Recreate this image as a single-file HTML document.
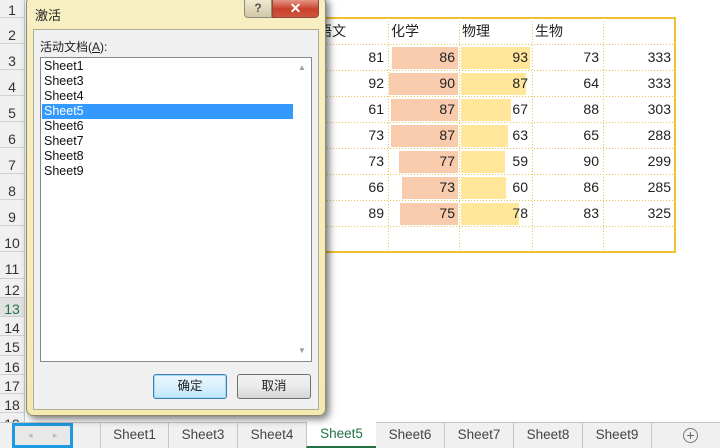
<!DOCTYPE html>
<html><head><meta charset="utf-8"><style>
*{margin:0;padding:0;box-sizing:border-box}
body{width:720px;height:448px;overflow:hidden;background:#fff;position:relative;font-family:"Liberation Sans","Noto Sans CJK SC",sans-serif;color:#222}
.a{position:absolute}
.rh{position:absolute;left:0;width:25px;background:#f0f0f0;border-bottom:1px solid #d0d0d0;border-right:1px solid #c8c8c8;font-size:14px;text-align:center;color:#333}
.cell{position:absolute;font-size:14px;height:26px;line-height:26px}
.num{text-align:right;padding-right:4px}
.tab{position:absolute;top:423px;height:25px;line-height:24px;font-size:13.5px;color:#444;text-align:center;border-left:1px solid #c6c6c6}
</style></head><body>
<div class="rh" style="top:0;height:18px;line-height:20px">1</div>
<div class="rh" style="top:18px;height:26px;line-height:34px">2</div>
<div class="rh" style="top:44px;height:26px;line-height:34px">3</div>
<div class="rh" style="top:70px;height:26px;line-height:34px">4</div>
<div class="rh" style="top:96px;height:26px;line-height:34px">5</div>
<div class="rh" style="top:122px;height:26px;line-height:34px">6</div>
<div class="rh" style="top:148px;height:26px;line-height:34px">7</div>
<div class="rh" style="top:174px;height:26px;line-height:34px">8</div>
<div class="rh" style="top:200px;height:26px;line-height:34px">9</div>
<div class="rh" style="top:226px;height:26px;line-height:34px">10</div>
<div class="rh" style="top:252px;height:27px;line-height:34px">11</div>
<div class="rh" style="top:279px;height:19px;line-height:22px">12</div>
<div class="rh" style="top:298px;height:19px;line-height:22px;color:#217346;background:#e1e1e1">13</div>
<div class="rh" style="top:317px;height:19px;line-height:22px">14</div>
<div class="rh" style="top:336px;height:20px;line-height:22px">15</div>
<div class="rh" style="top:356px;height:19px;line-height:22px">16</div>
<div class="rh" style="top:375px;height:19px;line-height:22px">17</div>
<div class="rh" style="top:394px;height:19px;line-height:22px">18</div>
<div class="rh" style="top:413px;height:12px;line-height:22px;overflow:hidden">19</div>
<div class="a" style="left:392px;top:47px;width:66px;height:22px;background:#f8cbad"></div>
<div class="a" style="left:389px;top:73px;width:69px;height:22px;background:#f8cbad"></div>
<div class="a" style="left:391px;top:99px;width:67px;height:22px;background:#f8cbad"></div>
<div class="a" style="left:391px;top:125px;width:67px;height:22px;background:#f8cbad"></div>
<div class="a" style="left:399px;top:151px;width:59px;height:22px;background:#f8cbad"></div>
<div class="a" style="left:402px;top:177px;width:56px;height:22px;background:#f8cbad"></div>
<div class="a" style="left:400px;top:203px;width:58px;height:22px;background:#f8cbad"></div>
<div class="a" style="left:461px;top:47px;width:69px;height:22px;background:#ffe699"></div>
<div class="a" style="left:461px;top:73px;width:65px;height:22px;background:#ffe699"></div>
<div class="a" style="left:461px;top:99px;width:50px;height:22px;background:#ffe699"></div>
<div class="a" style="left:461px;top:125px;width:47px;height:22px;background:#ffe699"></div>
<div class="a" style="left:461px;top:151px;width:44px;height:22px;background:#ffe699"></div>
<div class="a" style="left:461px;top:177px;width:45px;height:22px;background:#ffe699"></div>
<div class="a" style="left:461px;top:203px;width:58px;height:22px;background:#ffe699"></div>
<svg class="a" style="left:300px;top:0" width="420" height="260">
<g stroke="#e8c350" stroke-width="1" stroke-dasharray="1,2">
<line x1="0" y1="44.5" x2="375" y2="44.5"/><line x1="0" y1="70.5" x2="375" y2="70.5"/><line x1="0" y1="96.5" x2="375" y2="96.5"/><line x1="0" y1="122.5" x2="375" y2="122.5"/><line x1="0" y1="148.5" x2="375" y2="148.5"/><line x1="0" y1="174.5" x2="375" y2="174.5"/><line x1="0" y1="200.5" x2="375" y2="200.5"/><line x1="0" y1="226.5" x2="375" y2="226.5"/>
<line x1="88.5" y1="18" x2="88.5" y2="252"/><line x1="159.5" y1="18" x2="159.5" y2="252"/><line x1="232.5" y1="18" x2="232.5" y2="252"/><line x1="303.5" y1="18" x2="303.5" y2="252"/>
</g>
<rect x="0" y="18" width="375" height="234" fill="none" stroke="#f2c02e" stroke-width="2"/>
</svg>
<div class="cell" style="left:318px;top:18px">语文</div>
<div class="cell" style="left:391px;top:18px">化学</div>
<div class="cell" style="left:462px;top:18px">物理</div>
<div class="cell" style="left:535px;top:18px">生物</div>
<div id="nums"></div>
<div class="a" style="left:0;top:422px;width:720px;height:26px;background:#f0f0f0;border-top:1px solid #c6c6c6"></div>
<div class="a" style="left:12px;top:423px;width:61px;height:25px;border:3px solid #1e9be0;background:#e8e8e8;font-size:9px;color:#bbb;line-height:19px"><span style="position:absolute;left:13px">◂</span><span style="position:absolute;left:38px">▸</span></div>
<div class="tab" style="left:100px;width:68px">Sheet1</div>
<div class="tab" style="left:168px;width:69px">Sheet3</div>
<div class="tab" style="left:237px;width:69px">Sheet4</div>
<div class="tab" style="left:306px;width:70px;background:#fff;color:#217346;border-bottom:2px solid #217346;top:422px;height:26px">Sheet5</div>
<div class="tab" style="left:376px;width:68px;border-left:none">Sheet6</div>
<div class="tab" style="left:444px;width:69px">Sheet7</div>
<div class="tab" style="left:513px;width:69px">Sheet8</div>
<div class="tab" style="left:582px;width:69px">Sheet9</div>
<div class="tab" style="left:651px;width:1px"></div>
<div class="a" style="left:683px;top:428px;width:15px;height:15px;border:1px solid #777;border-radius:50%;font-size:14px;line-height:12px;text-align:center;color:#666">+</div>
<div class="a" style="left:26px;top:-4px;width:300px;height:420px;border-radius:7px;background:linear-gradient(#f7efc2,#f4eab0);border:1px solid #8a8a70;box-shadow:3px 3px 8px rgba(0,0,0,.55)"></div>
<div class="a" style="left:35px;top:5px;font-size:13px;color:#222">激活</div>
<div class="a" style="left:244px;top:-2px;width:28px;height:20px;border:1px solid #8d8d7a;border-radius:0 0 0 4px;background:linear-gradient(#f3ecd2,#cfc7a6);font-size:12px;text-align:center;line-height:19px;color:#555;font-weight:bold">?</div>
<div class="a" style="left:272px;top:-2px;width:47px;height:20px;border:1px solid #8d4a3a;border-radius:0 0 4px 0;background:linear-gradient(#e8a090,#c8412b 55%,#d0543c);color:#fff;font-size:14px;font-weight:bold;text-align:center;line-height:19px">✕</div>
<div class="a" style="left:33px;top:29px;width:286px;height:381px;background:#f0f0f0;border:1px solid #b0ad98"></div>
<div class="a" style="left:40px;top:38px;font-size:12px;color:#222">活动文档(<u>A</u>):</div>
<div class="a" style="left:40px;top:57px;width:272px;height:305px;background:#fff;border:1px solid #828790"></div>
<div class="a" style="left:42px;top:104px;width:251px;height:15px;background:#3399ff"></div>
<div class="a" style="left:44px;top:59px;font-size:12.5px;line-height:15px;color:#111">Sheet1<br>Sheet3<br>Sheet4<br><span style="color:#fff">Sheet5</span><br>Sheet6<br>Sheet7<br>Sheet8<br>Sheet9</div>
<div class="a" style="left:298px;top:63px;font-size:8px;color:#999">▲</div>
<div class="a" style="left:298px;top:346px;font-size:8px;color:#999">▼</div>
<div class="a" style="left:153px;top:374px;width:74px;height:25px;border:1px solid #3c7fb1;border-radius:3px;background:linear-gradient(#eaf6fd,#d9f0fc 50%,#bee6fd);box-shadow:inset 0 0 0 1px #a7d9f5;font-size:12.5px;text-align:center;line-height:23px">确定</div>
<div class="a" style="left:237px;top:374px;width:74px;height:25px;border:1px solid #707070;border-radius:3px;background:linear-gradient(#f2f2f2,#ebebeb 50%,#d6d6d6);font-size:12.5px;text-align:center;line-height:23px">取消</div>
<script>
var d=[[81,86,93,73,333],[92,90,87,64,333],[61,87,67,88,303],[73,87,63,65,288],[73,77,59,90,299],[66,73,60,86,285],[89,75,78,83,325]];
var xs=[[316,388],[388,459],[459,532],[532,603],[603,675]],h='';
d.forEach(function(r,i){r.forEach(function(v,j){h+='<div class="cell num" style="left:'+xs[j][0]+'px;width:'+(xs[j][1]-xs[j][0])+'px;top:'+(44+26*i)+'px">'+v+'</div>';});});
document.getElementById('nums').innerHTML=h;
</script>
</body></html>
